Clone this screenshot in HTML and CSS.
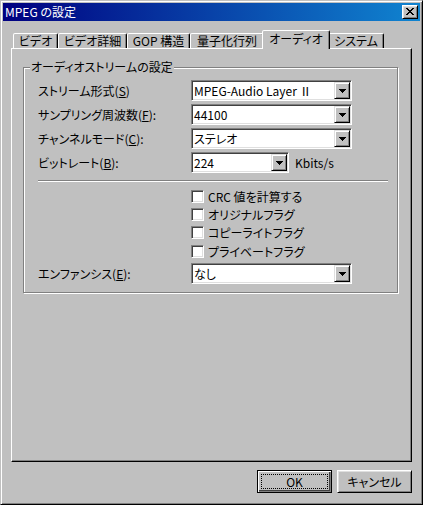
FILE: index.html
```html
<!DOCTYPE html>
<html lang="ja">
<head>
<meta charset="utf-8">
<title>MPEG の設定</title>
<link rel="stylesheet" href="styles.css">
</head>
<body>
<div class="window">
  <div class="titlebar">
    <span class="title">MPEG の設定</span>
    <span class="close"><svg width="8" height="7" viewBox="0 0 8 7" shape-rendering="crispEdges"><path fill="#000" d="M0 0h2v1H0z M6 0h2v1H6z M1 1h2v1H1z M5 1h2v1H5z M2 2h4v1H2z M3 3h2v1H3z M2 4h4v1H2z M1 5h2v1H1z M5 5h2v1H5z M0 6h2v1H0z M6 6h2v1H6z"/></svg></span>
  </div>
  <div class="client">
    <div class="tabs">
      <div class="tab t1">ビデオ</div>
      <div class="tab t2">ビデオ詳細</div>
      <div class="tab t3">GOP 構造</div>
      <div class="tab t4">量子化行列</div>
      <div class="tab selected">オーディオ</div>
      <div class="tab t6">システム</div>
    </div>
    <div class="page">
      <div class="group">
        <span class="group-title">オーディオストリームの設定</span>
        <div class="row first">
          <span class="label">ストリーム形式(<u>S</u>)</span>
          <div class="combo"><span class="value">MPEG-Audio Layer Ⅱ</span><span class="drop"><svg width="7" height="4" viewBox="0 0 7 4" shape-rendering="crispEdges"><path fill="#000" d="M0 0h7v1H0z M1 1h5v1H1z M2 2h3v1H2z M3 3h1v1H3z"/></svg></span></div>
        </div>
        <div class="row">
          <span class="label">サンプリング周波数(<u>F</u>):</span>
          <div class="combo"><span class="value">44100</span><span class="drop"><svg width="7" height="4" viewBox="0 0 7 4" shape-rendering="crispEdges"><path fill="#000" d="M0 0h7v1H0z M1 1h5v1H1z M2 2h3v1H2z M3 3h1v1H3z"/></svg></span></div>
        </div>
        <div class="row">
          <span class="label">チャンネルモード(<u>C</u>):</span>
          <div class="combo"><span class="value">ステレオ</span><span class="drop"><svg width="7" height="4" viewBox="0 0 7 4" shape-rendering="crispEdges"><path fill="#000" d="M0 0h7v1H0z M1 1h5v1H1z M2 2h3v1H2z M3 3h1v1H3z"/></svg></span></div>
        </div>
        <div class="row">
          <span class="label">ビットレート(<u>B</u>):</span>
          <div class="combo short"><span class="value">224</span><span class="drop"><svg width="7" height="4" viewBox="0 0 7 4" shape-rendering="crispEdges"><path fill="#000" d="M0 0h7v1H0z M1 1h5v1H1z M2 2h3v1H2z M3 3h1v1H3z"/></svg></span></div>
          <span class="unit">Kbits/s</span>
        </div>
        <div class="sep"></div>
        <div class="checks">
          <div class="check"><span class="cb"></span><span>CRC 値を計算する</span></div>
          <div class="check"><span class="cb"></span><span>オリジナルフラグ</span></div>
          <div class="check"><span class="cb"></span><span>コピーライトフラグ</span></div>
          <div class="check"><span class="cb"></span><span>プライベートフラグ</span></div>
        </div>
        <div class="row emph">
          <span class="label">エンファンシス(<u>E</u>):</span>
          <div class="combo"><span class="value">なし</span><span class="drop"><svg width="7" height="4" viewBox="0 0 7 4" shape-rendering="crispEdges"><path fill="#000" d="M0 0h7v1H0z M1 1h5v1H1z M2 2h3v1H2z M3 3h1v1H3z"/></svg></span></div>
        </div>
      </div>
    </div>
    <div class="buttons">
      <div class="btn default"><span class="focus">OK</span></div>
      <div class="btn"><span class="cap">キャンセル</span></div>
    </div>
  </div>
</div>
</body>
</html>
```

FILE: styles.css
```css
* {
  box-sizing: border-box;
}

html,
body {
  margin: 0;
  padding: 0;
}

body {
  background: #c0c0c0;
  color: #000;
  font-family: "Noto Sans CJK JP", "Noto Sans", sans-serif;
  font-size: 12px;
  font-feature-settings: "palt";
}

u {
  text-decoration: underline;
  text-underline-offset: 1px;
}

.window {
  width: 423px;
  height: 505px;
  background: #c0c0c0;
  border: 1px solid;
  border-color: #c0c0c0 #000 #000 #c0c0c0;
  box-shadow: inset 1px 1px 0 #fff, inset -1px -1px 0 #808080;
  padding: 2px;
  display: flex;
  flex-direction: column;
}

.titlebar {
  height: 18px;
  flex-shrink: 0;
  display: flex;
  align-items: center;
  justify-content: space-between;
  padding: 0 2px;
  background: linear-gradient(to right, #000080, #1084d0);
}

.title {
  color: #fff;
  line-height: 18px;
  white-space: nowrap;
}

.close {
  width: 16px;
  height: 14px;
  background: #c0c0c0;
  border: 1px solid;
  border-color: #fff #000 #000 #fff;
  box-shadow: inset 1px 1px 0 #dfdfdf, inset -1px -1px 0 #808080;
  display: flex;
  align-items: center;
  justify-content: center;
  padding: 0 0 1px 0;
}

.close svg {
  display: block;
}

.client {
  flex: 1;
  display: flex;
  flex-direction: column;
  padding: 9px 8px 0 8px;
}

.tabs {
  height: 18px;
  display: flex;
  align-items: flex-end;
  padding-left: 2px;
}

.tab {
  height: 15px;
  border: 1px solid;
  border-bottom: none;
  border-color: #fff #000 transparent #fff;
  border-radius: 2px 2px 0 0;
  box-shadow: inset -1px 0 0 #808080;
  background: #c0c0c0;
  text-align: center;
  line-height: 13px;
  white-space: nowrap;
  flex-shrink: 0;
}

.t1 { width: 45px; }
.t2 { width: 69px; }
.t3 { width: 63px; }
.t4 { width: 74px; }
.t6 { width: 56px; }

.tab.selected {
  width: 68px;
  height: 19px;
  margin: 0 -2px -1px -2px;
  position: relative;
  z-index: 1;
  line-height: 16px;
}

.page {
  height: 414px;
  flex-shrink: 0;
  border: 1px solid;
  border-color: #fff #000 #000 #fff;
  box-shadow: inset -1px -1px 0 #808080;
  padding: 18px 0 0 11px;
}

.group {
  width: 375px;
  height: 226px;
  border: 1px solid #808080;
  box-shadow: inset 1px 1px 0 #fff, 1px 1px 0 #fff;
  padding: 0 0 0 14px;
  display: flex;
  flex-direction: column;
}

.group-title {
  align-self: flex-start;
  margin: -8px 0 0 -8px;
  padding: 0 1px;
  line-height: 14px;
  background: #c0c0c0;
  white-space: nowrap;
}

.row {
  display: flex;
  align-items: center;
  height: 21px;
  flex-shrink: 0;
  margin-top: 3px;
}

.row.first {
  margin-top: 6px;
}

.label {
  width: 153px;
  flex-shrink: 0;
  white-space: nowrap;
}

.combo {
  width: 161px;
  height: 21px;
  flex-shrink: 0;
  border: 1px solid;
  border-color: #808080 #fff #fff #808080;
  box-shadow: inset 1px 1px 0 #404040, inset -1px -1px 0 #dfdfdf;
  padding: 1px;
  background: #fff;
  display: flex;
}

.combo.short {
  width: 98px;
}

.value {
  flex: 1;
  padding-left: 1px;
  line-height: 17px;
  white-space: nowrap;
  overflow: hidden;
}

.drop {
  width: 16px;
  height: 17px;
  flex-shrink: 0;
  background: #c0c0c0;
  border: 1px solid;
  border-color: #dfdfdf #000 #000 #dfdfdf;
  box-shadow: inset 1px 1px 0 #fff, inset -1px -1px 0 #808080;
  display: flex;
  align-items: center;
  justify-content: center;
}

.drop svg {
  display: block;
}

.unit {
  margin-left: 6px;
  white-space: nowrap;
}

.sep {
  height: 2px;
  flex-shrink: 0;
  border-top: 1px solid #808080;
  border-bottom: 1px solid #fff;
  margin: 7px 9px 0 0;
}

.checks {
  margin-top: 5px;
  padding-left: 153px;
  display: flex;
  flex-direction: column;
}

.check {
  height: 18.33px;
  display: flex;
  align-items: center;
  white-space: nowrap;
}

.cb {
  width: 13px;
  height: 13px;
  flex-shrink: 0;
  background: #fff;
  border: 1px solid;
  border-color: #808080 #fff #fff #808080;
  box-shadow: inset 1px 1px 0 #404040, inset -1px -1px 0 #dfdfdf;
  margin-right: 4px;
}

.buttons {
  display: flex;
  justify-content: flex-end;
  gap: 5px;
  margin-top: 8px;
}

.btn {
  width: 75px;
  height: 23px;
  background: #c0c0c0;
  border: 1px solid;
  border-color: #fff #000 #000 #fff;
  box-shadow: inset 1px 1px 0 #dfdfdf, inset -1px -1px 0 #808080;
  display: flex;
  padding: 3px;
}

.btn.default {
  border-color: #000;
  box-shadow: inset 1px 1px 0 #fff, inset -1px -1px 0 #808080, inset -2px -2px 0 #404040;
}

.focus,
.cap {
  flex: 1;
  display: flex;
  align-items: center;
  justify-content: center;
  line-height: 15px;
  white-space: nowrap;
}

.focus {
  border: 1px dotted #000;
}
```
